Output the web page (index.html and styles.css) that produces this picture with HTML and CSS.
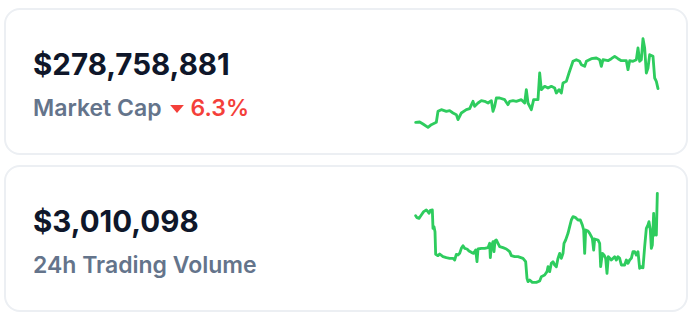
FILE: index.html
```html
<!DOCTYPE html>
<html lang="en">
<head>
    <meta charset="UTF-8">
    <meta name="viewport" content="width=device-width, initial-scale=1.0">
    <title>Market Stats</title>
    <link rel="stylesheet" href="styles.css">
</head>
<body>
    <div class="stats">
        <div class="stat-card">
            <div class="stat-info">
                <div class="stat-value">$278,758,881</div>
                <div class="stat-label">
                    Market Cap<span class="change down"><svg class="caret" viewBox="0 0 12 7" width="14" height="8"><path d="M0 0 L12 0 L6 7 Z"/></svg>6.3%</span>
                </div>
            </div>
            <svg class="sparkline" viewBox="213 98 738 288" width="246" height="96">
                <polyline points="218,363 230,362 240,368 255,378 265,370 280,363 285,330 295,325 310,330 320,328 330,335 340,340 345,355 355,335 370,325 380,322 390,300 395,315 405,305 415,298 425,300 435,305 445,298 450,330 455,315 460,290 470,290 485,295 495,310 500,300 510,298 520,300 535,295 545,305 550,265 555,305 565,325 572,295 585,295 590,215 595,265 605,255 615,260 625,255 635,260 640,275 648,265 655,275 660,245 670,240 678,215 690,180 700,175 710,180 715,190 725,195 730,180 745,172 760,170 770,175 775,195 780,175 795,178 805,172 815,165 825,172 835,178 850,178 855,205 860,178 870,180 880,175 885,140 890,180 895,175 900,112 905,140 910,215 915,200 920,160 930,165 935,230 940,240 945,262"/>
            </svg>
        </div>

        <div class="stat-card">
            <div class="stat-info">
                <div class="stat-value">$3,010,098</div>
                <div class="stat-label">24h Trading Volume</div>
            </div>
            <svg class="sparkline" viewBox="213 98 738 288" width="246" height="96">
                <polyline points="218,172 222,178 228,180 235,170 242,160 250,155 255,160 258,165 262,156 268,155 270,210 273,205 276,220 278,288 285,292 290,287 300,295 310,298 320,300 330,300 335,305 340,288 345,290 350,285 355,270 360,262 365,270 372,272 378,278 385,282 392,285 398,275 402,310 405,272 415,270 425,270 435,268 440,255 442,298 445,265 450,250 453,280 456,248 460,245 465,255 470,265 480,268 490,272 500,280 505,292 515,295 525,295 540,300 548,310 552,360 555,370 560,365 568,372 580,372 590,368 595,355 605,350 612,340 615,325 620,340 625,315 630,310 635,320 640,325 645,300 650,285 655,300 660,285 663,255 668,245 675,225 680,205 685,185 690,175 698,178 705,185 712,185 718,200 722,215 725,285 728,215 735,218 740,225 748,240 752,275 755,242 765,245 770,255 773,325 778,285 783,290 788,300 792,345 796,295 805,305 815,295 820,305 825,295 830,300 835,320 845,320 850,305 855,315 860,305 865,300 870,280 875,280 880,290 885,280 890,330 895,325 900,328 905,265 910,210 915,200 918,190 922,215 925,270 928,260 932,165 935,230 938,220 940,230 943,105"/>
            </svg>
        </div>
    </div>
</body>
</html>
```

FILE: styles.css
```css
body {
    margin: 0;
    background-color: #fff;
    font-family: Inter, "Noto Sans", sans-serif;
}
.stats {
    display: flex;
    flex-direction: column;
    gap: 10px;
    padding: 8px 3px 0 4px;
}
.stat-card {
    display: flex;
    align-items: center;
    justify-content: space-between;
    height: 147px;
    box-sizing: border-box;
    padding: 0 26px 0 27px;
    border: 2px solid #eceff3;
    border-radius: 16px;
    background-color: #fff;
}
.stat-info {
    display: flex;
    flex-direction: column;
    gap: 12px;
    padding-top: 6px;
}
.stat-value {
    font-size: 29.5px;
    font-weight: 700;
    color: #0f172a;
    line-height: 34px;
}
.stat-label {
    font-size: 23px;
    font-weight: 600;
    color: #64748b;
    line-height: 30px;
}
.change.down {
    color: #f43f3a;
}
.caret {
    fill: currentColor;
    margin: 0 7px 0 8px;
    vertical-align: 3px;
}
.sparkline {
    display: block;
}
.sparkline polyline {
    fill: none;
    stroke: #2ecc5e;
    stroke-width: 8.5;
    stroke-linejoin: round;
    stroke-linecap: round;
}
```
